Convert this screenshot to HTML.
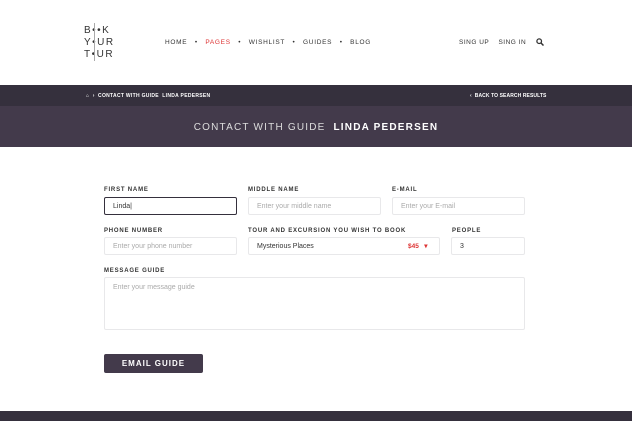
<!DOCTYPE html>
<html><head><style>
*{margin:0;padding:0;box-sizing:border-box}
body{width:632px;height:421px;background:#fff;font-family:"Liberation Sans",sans-serif;position:relative;overflow:hidden}
.a{position:absolute}
.nav{font-size:6.5px;letter-spacing:.7px;color:#333;top:39px}
.lbl{font-size:6px;letter-spacing:.8px;color:#333;font-weight:bold}
.in{border:1px solid #e8e8ea;border-radius:2px;font-size:7px;color:#aaa;padding-left:8px;display:flex;align-items:center}
</style></head><body>
<div class="a" style="left:84px;top:25px;font-size:10px;line-height:12px;letter-spacing:1.5px;color:#333">B••K<br>Y•UR<br>T•UR</div>
<div class="a" style="left:94px;top:23px;width:1px;height:38px;background:#aaa"></div>
<div class="a nav" style="left:165px">HOME&nbsp;&nbsp;&nbsp;•&nbsp;&nbsp;&nbsp;<span style="color:#d33">PAGES</span>&nbsp;&nbsp;&nbsp;•&nbsp;&nbsp;&nbsp;WISHLIST&nbsp;&nbsp;&nbsp;•&nbsp;&nbsp;&nbsp;GUIDES&nbsp;&nbsp;&nbsp;•&nbsp;&nbsp;&nbsp;BLOG</div>
<div class="a nav" style="left:459px;letter-spacing:.5px">SING UP&nbsp;&nbsp;&nbsp;&nbsp;SING IN</div>
<svg class="a" style="left:536px;top:38px" width="8" height="8"><circle cx="3.2" cy="3.2" r="2.3" fill="none" stroke="#333" stroke-width="1.3"/><path d="M5 5L7.5 7.5" stroke="#333" stroke-width="1.5"/></svg>
<div class="a" style="left:0;top:85px;width:632px;height:21px;background:#35303d"></div>
<div class="a" style="left:86px;top:93px;font-size:5px;color:#fff;font-weight:bold;letter-spacing:.3px">⌂ &nbsp;›&nbsp; CONTACT WITH GUIDE &nbsp;LINDA PEDERSEN</div>
<div class="a" style="left:470px;top:93px;font-size:5px;color:#fff;font-weight:bold;letter-spacing:.1px">‹ &nbsp;BACK TO SEARCH RESULTS</div>
<div class="a" style="left:0;top:106px;width:632px;height:41px;background:#433a4b"></div>
<div class="a" style="left:0;top:122px;width:632px;text-align:center;font-size:10px;letter-spacing:1.2px;color:#ddd">CONTACT WITH GUIDE &nbsp;<b style="color:#fff">LINDA PEDERSEN</b></div>
<div class="a lbl" style="left:104px;top:187px">FIRST NAME</div>
<div class="a lbl" style="left:248px;top:187px">MIDDLE NAME</div>
<div class="a lbl" style="left:392px;top:187px">E-MAIL</div>
<div class="a in" style="left:104px;top:197px;width:133px;height:18px;border:1.5px solid #35303d;color:#333">Linda|</div>
<div class="a in" style="left:248px;top:197px;width:133px;height:18px">Enter your middle name</div>
<div class="a in" style="left:392px;top:197px;width:133px;height:18px">Enter your E-mail</div>
<div class="a lbl" style="left:104px;top:228px">PHONE NUMBER</div>
<div class="a lbl" style="left:248px;top:228px">TOUR AND EXCURSION YOU WISH TO BOOK</div>
<div class="a lbl" style="left:452px;top:228px">PEOPLE</div>
<div class="a in" style="left:104px;top:237px;width:133px;height:18px">Enter your phone number</div>
<div class="a in" style="left:248px;top:237px;width:192px;height:18px;color:#333">Mysterious Places<span style="position:absolute;left:159px;color:#d33;font-weight:bold;font-size:6.5px">$45&nbsp;&nbsp;&nbsp;▾</span></div>
<div class="a in" style="left:451px;top:237px;width:74px;height:18px;color:#333">3</div>
<div class="a lbl" style="left:104px;top:268px">MESSAGE GUIDE</div>
<div class="a in" style="left:104px;top:277px;width:421px;height:53px;align-items:flex-start;padding-top:6px">Enter your message guide</div>
<div class="a" style="left:104px;top:354px;width:99px;height:19px;background:#433a4b;border-radius:2px;color:#fff;font-size:8px;font-weight:bold;letter-spacing:1px;text-align:center;line-height:19px">EMAIL GUIDE</div>
<div class="a" style="left:0;top:411px;width:632px;height:10px;background:#35303d"></div>
</body></html>
